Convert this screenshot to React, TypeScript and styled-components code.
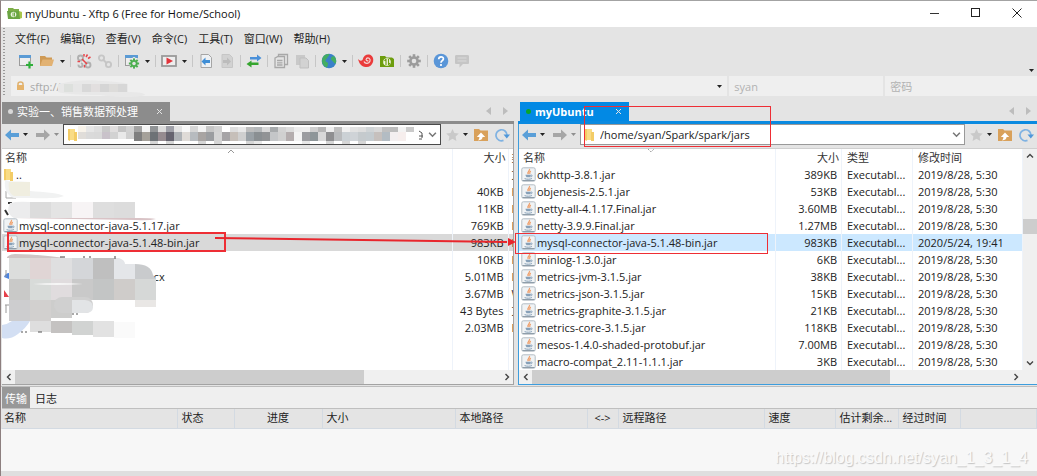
import React from "react";
import styled, { createGlobalStyle, css } from "styled-components";

const Global = createGlobalStyle`
  *, *::before, *::after { box-sizing: border-box; }
  body { margin: 0; background: #e4e4e4; }
  body, button, input, table {
    font-family: "Open Sans", "Noto Sans CJK SC", sans-serif;
    font-size: 11px;
    color: #222;
  }
  button { border: 0; padding: 0; background: none; }
  input { border: 0; padding: 0; background: none; outline: 0; min-width: 0; }
  svg { display: block; flex: none; }
`;

const Window = styled.div`
  display: flex;
  flex-direction: column;
  min-height: 100vh;
  border-top: 1px solid #a3a3a3;
  border-left: 1px solid #8d7f7f;
  background: #e4e4e4;
  overflow: hidden;
`;

const TitleBar = styled.header`
  display: flex;
  align-items: center;
  gap: 3px;
  height: 26px;
  padding: 0 12px 2px 6px;
  background: #fff;
`;

const Title = styled.h1`
  flex: 1;
  margin: 0;
  font-size: 11px;
  font-weight: 400;
  color: #111;
`;

const WindowButtons = styled.div`
  display: flex;
  gap: 25px;
`;

const WindowButton = styled.button`
  width: 16px;
  height: 16px;
  display: grid;
  place-items: center;
`;

const Bars = styled.div`
  display: flex;
  padding-top: 1px;
`;

const Grip = styled.div`
  width: 2px;
  margin: 0 6px 0 2px;
  background: repeating-linear-gradient(#9a9a9a 0 1px, transparent 1px 3px);
`;

const BarStack = styled.div`
  flex: 1;
  min-width: 0;
`;

const Menu = styled.nav`
  display: flex;
  gap: 11px;
  height: 20px;
  align-items: center;
  padding-left: 4px;
`;

const ToolBar = styled.div`
  display: flex;
  align-items: center;
  gap: 5px;
  height: 28px;
  padding: 0 3px 2px 7px;
`;

const ToolButton = styled.button<{ $push?: boolean }>`
  width: 16px;
  height: 16px;
  ${(p) =>
    p.$push &&
    css`
      width: 5px;
      margin: 18px 0 0 auto;
    `}
`;

const DropButton = styled.button`
  width: 5px;
  height: 16px;
  display: grid;
  place-items: center;
`;

const Separator = styled.span`
  width: 1px;
  height: 12px;
  background: #c6c6c6;
`;

const SessionBar = styled.div`
  display: grid;
  grid-template-columns: minmax(0, 717fr) minmax(0, 154fr) minmax(0, 152fr);
  gap: 2px;
  height: 20px;
`;

const SessionField = styled.label`
  position: relative;
  display: flex;
  align-items: center;
  gap: 5px;
  padding: 0 5px;
  background: #efefef;
  input { flex: 1; width: 0; color: #a8a8a8; }
  input::placeholder { color: #b2b2b2; opacity: 1; }
`;

const AddressMosaic = styled.svg`
  position: absolute;
  left: 47px;
  top: 3px;
`;

const Panes = styled.main`
  display: grid;
  grid-template-columns: minmax(0, 512fr) minmax(0, 519fr);
  gap: 4px;
  padding-left: 1px;
`;

const Pane = styled.section`
  position: relative;
  min-width: 0;
`;

const TabStrip = styled.div<{ $active: boolean }>`
  display: flex;
  align-items: flex-end;
  height: 28px;
  padding-left: ${(p) => (p.$active ? 2 : 0)}px;
  border-bottom: 3px solid ${(p) => (p.$active ? "#0b8ae0" : "#8c8c8c")};
`;

const Tab = styled.div<{ $active: boolean }>`
  display: flex;
  align-items: center;
  height: 19px;
  width: ${(p) => (p.$active ? 109 : 168)}px;
  padding: 0 7px 0 6px;
  background: ${(p) => (p.$active ? "#0289e4" : "#8c8c8c")};
  button { color: #fff; line-height: 18px; white-space: nowrap; }
  button:first-of-type {
    flex: 1;
    text-align: left;
    font-weight: ${(p) => (p.$active ? 700 : 400)};
  }
`;

const Dot = styled.span<{ $color: string }>`
  width: 5px;
  height: 5px;
  margin-right: 4px;
  border-radius: 50%;
  background: ${(p) => p.$color};
`;

const TabArrows = styled.div`
  display: flex;
  gap: 10px;
  margin: 0 6px 6px auto;
`;

const PaneBody = styled.div<{ $active: boolean }>`
  border: 1px solid ${(p) => (p.$active ? "#3d9ddd" : "#a3a3a3")};
  border-top: 0;
  border-left-width: ${(p) => (p.$active ? 1 : 0)}px;
  border-right-width: ${(p) => (p.$active ? 0 : 1)}px;
  background: #fff;
`;

const PaneTools = styled.div`
  display: flex;
  align-items: center;
  height: 25px;
  padding: 0 3px 3px;
  gap: 4px;
  background: #e4e4e4;
  border-bottom: 1px solid #cfcfcf;
`;

const PaneButton = styled.button<{ $w: number; $end?: boolean }>`
  width: ${(p) => p.$w}px;
  height: 16px;
  display: grid;
  align-items: center;
  justify-items: ${(p) => (p.$end ? "end" : "center")};
`;

const PathBox = styled.label<{ $active: boolean }>`
  position: relative;
  flex: 1;
  display: flex;
  align-items: center;
  height: 21px;
  min-width: 0;
  padding: 0 3px;
  gap: 4px;
  background: #fff;
  border: 1px solid ${(p) => (p.$active ? "#999" : "#4a4a4a")};
  input { flex: 1; width: 0; }
`;

const PathMosaic = styled.svg`
  position: absolute;
  left: 14px;
  top: 0;
`;

const ListArea = styled.div`
  position: relative;
  display: flex;
`;

const FileTable = styled.table<{ $active: boolean }>`
  flex: 1;
  width: 100%;
  min-width: 0;
  table-layout: fixed;
  border-collapse: collapse;
  th, td {
    height: 17px;
    padding: 0 4px 0 5px;
    line-height: 16px;
    font-weight: 400;
    text-align: left;
    white-space: nowrap;
    overflow: hidden;
    border-right: 1px solid #eef3fa;
  }
  th { position: relative; color: #333; }
  th:nth-child(2), td:nth-child(2) { text-align: right; }
  th:nth-child(2) { padding-right: 2px; }
  th:first-child { padding-left: ${(p) => (p.$active ? 4 : 3)}px; }
  td:first-child { padding-left: ${(p) => (p.$active ? 2 : 1)}px; }
  ${(p) =>
    !p.$active &&
    css`
      th:last-child, td:last-child { padding: 0 0 0 3px; border-right: 0; }
    `}
`;

const FileRow = styled.tr<{ $bg?: string }>`
  background: ${(p) => p.$bg || "transparent"};
`;

const FileName = styled.div<{ $shift?: boolean }>`
  display: flex;
  align-items: center;
  gap: 1px;
  height: 17px;
  padding-left: ${(p) => (p.$shift ? 144 : 0)}px;
`;

const SortMark = styled.svg`
  position: absolute;
  left: 50%;
  top: 0;
`;

const ListMosaic = styled.svg`
  position: absolute;
  left: 0;
  top: 0;
`;

const VScroll = styled.div`
  display: flex;
  flex-direction: column;
  align-items: center;
  width: 14px;
  background: #f0f0f0;
`;

const VThumb = styled.div`
  width: 14px;
  height: 15px;
  margin: 56px 0 auto;
  background: #cdcdcd;
`;

const HScroll = styled.div`
  display: flex;
  height: 14px;
  background: #f0f0f0;
`;

const HTrack = styled.div`
  flex: 1;
`;

const HThumb = styled.div<{ $share: number }>`
  width: ${(p) => p.$share}%;
  height: 14px;
  background: #cdcdcd;
`;

const ScrollButton = styled.button`
  width: 13px;
  height: 14px;
  display: grid;
  place-items: center;
`;

const ScrollCorner = styled.span`
  width: 15px;
`;

const Mark = styled.div<{ $x: number; $y: number; $w: number; $h: number; $line: number }>`
  position: absolute;
  left: ${(p) => p.$x}px;
  top: ${(p) => p.$y}px;
  width: ${(p) => p.$w}px;
  height: ${(p) => p.$h}px;
  border: ${(p) => p.$line}px solid #ee2e35;
  z-index: 2;
  pointer-events: none;
`;

const Arrow = styled.svg`
  position: absolute;
  right: -3px;
  top: 136px;
  z-index: 2;
`;

const Bottom = styled.section`
  position: relative;
  flex: 1;
  display: flex;
  flex-direction: column;
  margin-top: 1px;
  padding-left: 1px;
  border-top: 1px solid #bdbdbd;
`;

const BottomTabs = styled.div`
  display: flex;
  height: 22px;
  background: #efefef;
  border-bottom: 1px solid #bfbfbf;
`;

const BottomTab = styled.button<{ $on?: boolean }>`
  width: ${(p) => (p.$on ? 28 : 32)}px;
  height: 21px;
  background: ${(p) => (p.$on ? "#989898" : "transparent")};
  color: ${(p) => (p.$on ? "#fff" : "#222")};
`;

const TransferTable = styled.table`
  width: 100%;
  table-layout: fixed;
  border-collapse: collapse;
  th {
    height: 19px;
    padding: 0 4px;
    line-height: 16px;
    font-weight: 400;
    text-align: left;
    white-space: nowrap;
    overflow: hidden;
    background: #e4e4e4;
    border-right: 1px solid #d3dae2;
    border-bottom: 1px solid #d3dae2;
  }
  th:first-child { padding-left: 2px; }
  th:nth-child(3), th:nth-child(6) { text-align: center; }
`;

const TransferBody = styled.div`
  flex: 1;
  min-height: 40px;
  margin-left: -1px;
  background: #f7f7f7;
  border-bottom: 5px solid #dfdfdf;
`;

const Watermark = styled.span`
  position: absolute;
  right: 9px;
  bottom: 8px;
  font-family: "Liberation Sans", sans-serif;
  font-size: 16px;
  line-height: 20px;
  color: #fafafa;
  text-shadow: 1px 1px 1px #c4c4c4;
`;

const Down = ({ c = "#222" }: { c?: string }) => (
  <svg width="5" height="3" viewBox="0 0 5 3"><path d="M0 0h5L2.5 3z" fill={c} /></svg>
);

const Chevron = ({ dir, c = "#444", s = 8 }: { dir: "l" | "r" | "u" | "d"; c?: string; s?: number }) => {
  const d = { l: "M5.5 1 2.5 4 5.5 7", r: "M2.5 1 5.5 4 2.5 7", u: "M1 5.5 4 2.5 7 5.5", d: "M1 2.5 4 5.5 7 2.5" }[dir];
  return (
    <svg width={s} height={s} viewBox="0 0 8 8"><path d={d} fill="none" stroke={c} strokeWidth="1.4" /></svg>
  );
};

const JavaIcon = () => (
  <svg width="15" height="15" viewBox="0 0 15 15">
    <rect x=".8" y=".8" width="13.4" height="13.4" rx="1.5" fill="#f0f3f5" stroke="#b3bcc3" />
    <path d="M1.500 13.500h12" stroke="#8f9eaa" />
    <path d="M8.300 2c1.400 1.600-2.800 2.600-.9 5.200M9.800 4c-1.600 1-1.400 1.600-.9 3" fill="none" stroke="#efa06c" strokeWidth="1.300" />
    <path d="M4.500 7.800h5.400c.1 1.500-.8 2.400-1.100 2.500H5.700c-.7-.5-1.100-1.200-1.200-2.500z" fill="#86a0b8" />
    <path d="M10 8.200c1.800-.4 1.500 1.500-.5 1.700M3.600 11.600c2 .9 5.600.8 7.300-.1" fill="none" stroke="#86a0b8" />
  </svg>
);

const FolderIcon = () => (
  <svg width="12" height="14" viewBox="0 0 12 14">
    <path d="M1 1h7v11H1z" fill="#f9dc86" />
    <path d="M1 1h2v12L1 12zM7 4h3v9H7z" fill="#f3cc66" />
  </svg>
);

const BackIcon = () => (
  <svg width="14" height="12" viewBox="0 0 14 12"><path d="M0 6 6 .5V4h8v4H6v3.500z" fill="#5a9fd8" /></svg>
);
const ForwardIcon = () => (
  <svg width="14" height="12" viewBox="0 0 14 12"><path d="M14 6 8 .5V4H0v4h8v3.500z" fill="#a6a6a6" /></svg>
);

const Gear = ({ c, x = 8, y = 8, s = 1 }: { c: string; x?: number; y?: number; s?: number }) => (
  <g transform={`translate(${x} ${y}) scale(${s})`}>
    {[0, 45, 90, 135].map((a) => (
      <rect key={a} x="-1.300" y="-6.800" width="2.600" height="13.600" fill={c} transform={`rotate(${a})`} />
    ))}
    <circle r="4.800" fill={c} />
    <circle r="2.300" fill="#e4e4e4" />
  </g>
);

const tools: { name: string; art?: React.ReactNode; drop?: boolean; sep?: boolean }[] = [
  {
    name: "新建",
    art: (<><rect x="1.500" y="2.500" width="11" height="10" fill="#eee" stroke="#9b9b9b" /><path d="M1 2h12v3H1z" fill="#5b9bd5" /><path d="M11.500 8.500v7M8 12h7" stroke="#e4e4e4" strokeWidth="4" /><path d="M11.500 8.500v7M8 12h7" stroke="#2fae3a" strokeWidth="2.200" /></>),
  },
  {
    name: "打开", drop: true, sep: true,
    art: <><path d="M1 3h5l1.500 1.500H13V13H1z" fill="#cf9a55" /><path d="m1 13 2.500-6.500H15L13 13z" fill="#e2b273" /></>,
  },
  {
    name: "断开",
    art: (<><g fill="none" stroke="#b0b0b0" strokeWidth="1.900"><circle cx="4.500" cy="5" r="2.500" /><circle cx="12" cy="12" r="2.500" /><circle cx="4.500" cy="12" r="2" strokeDasharray="6 3" /></g><path d="m6 6 5 5M8 1v2.500M11.500 1.500 10 4M14.500 4 12 5.500M1.500 8.500H4M8.500 12v2.500" stroke="#e8454a" strokeWidth="1.500" /></>),
  },
  {
    name: "重新连接", sep: true,
    art: (<g fill="none" stroke="#c6c6c6" strokeWidth="1.900"><circle cx="4.500" cy="5" r="2.600" /><circle cx="11.500" cy="11.500" r="2.600" /><path d="m6 6.500 4 4" /></g>),
  },
  {
    name: "属性", drop: true, sep: true,
    art: (<><rect x="1.500" y="2.500" width="12" height="10" fill="#eee" stroke="#9b9b9b" /><path d="M1 2h13v3H1z" fill="#5b9bd5" /><Gear c="#e4e4e4" x={10} y={10.5} s={0.95} /><Gear c="#4caf50" x={10} y={10.5} s={0.75} /></>),
  },
  {
    name: "运行", drop: true, sep: true,
    art: (<><rect x="1" y="3" width="14" height="10" fill="#eee" stroke="#9a9a9a" strokeWidth="1.800" /><path d="M5.500 4.500v7L12 8z" fill="#e2343b" /></>),
  },
  {
    name: "下载",
    art: (<><path d="M3 1.500h7.500l3 3V14.500H3z" fill="#eef1f4" stroke="#a5a5a5" /><path d="m3.500 8.500 4-4V7H12v3H7.500v2.500z" fill="#3f8ed6" /></>),
  },
  {
    name: "上传", sep: true,
    art: (<><path d="M3 1.500h7.500l3 3V14.500H3z" fill="#d2d2d2" stroke="#c6c6c6" /><path d="m12 8.500-4-4V7H4v3h4v2.500z" fill="#bcbcbc" /></>),
  },
  {
    name: "传输", sep: true,
    art: (<><path d="M4 4h7V1.500L15.500 5 11 8.500V6.500H4z" fill="#4a90d9" /><path d="M12.500 9.500h-7V7.500L.5 11 5.500 14.500V12h7z" fill="#35a52f" /></>),
  },
  {
    name: "复制",
    art: (<g fill="#e4e4e4" stroke="#a8a8a8" strokeWidth="1.300"><path d="M5.500 1.500h9v10h-9z" /><path d="M2 5 5 3.500h6.500v11H2z" /><path d="M4 7.500h5.500M4 9.800h5.500M4 12h5.500" /></g>),
  },
  {
    name: "粘贴", sep: true,
    art: <><path d="M2 2h9v10H2z" fill="#c9c9c9" /><path d="M6 5h6l2.500 2.500V15H6z" fill="#d2d2d2" stroke="#bfbfbf" /></>,
  },
  {
    name: "浏览器", drop: true, sep: true,
    art: (<><circle cx="8" cy="8" r="7.300" fill="#3a80c9" /><path d="M1.500 5C3 1.500 6 .8 8 1c1 1.500-1 2-1.500 3.500S4 6.500 4.500 8s3 1 2.500 3-.5 3-1.500 3.500C2 13 0 9 1.500 5zM10 5c1-2 2.500-2 3.500-1.500 1.500 2 2.200 4 1.300 7-1.300.5-1.800-1-2.800-2S9.500 6.500 10 5z" fill="#43ad61" /></>),
  },
  {
    name: "Xshell",
    art: (<><path d="M0 6c2 2 3 2 4.500 1C5.500 3 8 1.200 11 1.500c3.500.5 5 4 4 7.500-1 3.500-4 5.500-7.500 5C3.500 13.500 1 10.500 0 6z" fill="#ea3b3b" /><path d="M6 8.500c1 2.500 5 2.500 6-.5.7-2.500-2-4-3.500-2.500-1.200 1.500.5 3 1.800 2" fill="none" stroke="#f6d9d6" strokeWidth="1.200" /></>),
  },
  {
    name: "Xftp", sep: true,
    art: (<><path d="M1 3h5l1.500 1.500H13L15 6v8H1z" fill="#6d9d0e" /><circle cx="8" cy="9" r="3.800" fill="#f4f7e8" /><path d="M7 6v6M9.500 6v6M5.500 8 7 6M11 10l-1.500 2" stroke="#6d9d0e" strokeWidth="1.200" /></>),
  },
  { name: "选项", sep: true, art: <Gear c="#9c9c9c" /> },
  {
    name: "帮助",
    art: (<><circle cx="8" cy="8" r="7.300" fill="#5a96d8" /><path d="M5.700 6.300c0-3.300 4.900-3.100 4.700-.4C10.300 7.600 8 7.700 8 9.700M8 11v2" fill="none" stroke="#fff" strokeWidth="1.700" /></>),
  },
  {
    name: "反馈",
    art: (<><path d="M2.500 2h11C15 2 15 3 15 3.500v6c0 1-.5 1.500-1.500 1.500H9l-3.500 3.500V11h-3C1.500 11 1 10.500 1 9.500v-6C1 2.500 1.500 2 2.500 2z" fill="#c5c5c5" /><path d="M3.500 5h9M3.500 8h9" stroke="#dadada" /></>),
  },
];

type FileItem = { name: string; size: string; type: string; date?: string; icon?: "java" | "folder"; shift?: boolean; bg?: string };

const localFiles: FileItem[] = [
  { name: "..", size: "", type: "文", icon: "folder" },
  { name: "", size: "40KB", type: "E" },
  { name: "", size: "11KB", type: "E" },
  { name: "mysql-connector-java-5.1.17.jar", size: "769KB", type: "E", icon: "java" },
  { name: "mysql-connector-java-5.1.48-bin.jar", size: "983KB", type: "E", icon: "java", bg: "#d9d9d9" },
  { name: "", size: "10KB", type: "E" },
  { name: "ocx", size: "5.01MB", type: "D", shift: true },
  { name: "", size: "3.67MB", type: "W" },
  { name: "", size: "43 Bytes", type: "文" },
  { name: "", size: "2.03MB", type: "E" },
];

const remoteFiles: FileItem[] = (
  [
    ["okhttp-3.8.1.jar", "389KB"],
    ["objenesis-2.5.1.jar", "53KB"],
    ["netty-all-4.1.17.Final.jar", "3.60MB"],
    ["netty-3.9.9.Final.jar", "1.27MB"],
    ["mysql-connector-java-5.1.48-bin.jar", "983KB"],
    ["minlog-1.3.0.jar", "6KB"],
    ["metrics-jvm-3.1.5.jar", "38KB"],
    ["metrics-json-3.1.5.jar", "15KB"],
    ["metrics-graphite-3.1.5.jar", "21KB"],
    ["metrics-core-3.1.5.jar", "118KB"],
    ["mesos-1.4.0-shaded-protobuf.jar", "7.00MB"],
    ["macro-compat_2.11-1.1.1.jar", "3KB"],
  ] as const
).map(([name, size], i) => ({
  name,
  size,
  type: "Executabl...",
  date: i === 4 ? "2020/5/24, 19:41" : "2019/8/28, 5:30",
  icon: "java" as const,
  bg: i === 4 ? "#cce8ff" : undefined,
}));

const pathCells = [
  "#f8f3ea #e6e6e6 #dedede #c9c9c9 #e0dede #c4c4c4 #d2d2d2 #a3a3a3 #f3f3f3 #919496 #dcdcdc #9fa0a8 #e4e4e4 #f8f8f8 #d6d6d6 #f2f2f2 #c6c6c6 #d2d2d2 #fff #dedede #e8e8e8 #bdbdbd #b5b8ba #d8d8d8 #a8abad #d3d3d3 #dcdcdc #ececec #ededed #cfcfcf #b7b7b7 #eeeeee #c0c0c0 #f0f0f0 #e2e2e2 #dedede #d0d4d6 #d8d8d8 #c0c0c0 #bdbdbd #f3f3f3 #cbcbcb".split(" "),
  "#e0ddd9 #dadada #d9d9d9 #c9c2ca #d2d2d2 #e9e9e9 #d0d0d0 #7f7f7f #a5a19a #6d7276 #958b90 #65636f #aeb2b6 #dfdbd7 #b7bbbf #a8a4a2 #9b9da0 #d4d4d4 #a6a4a6 #c6bfb9 #cfcfcf #9aa1a6 #8a8f92 #919395 #c4c6c8 #d0d0d0 #b4adae #f3f3f3 #9b9ca0 #8e9699 #d8d8d8 #8f8f91 #b9bbbd #cbd1d5 #cfd3d7 #c5cacd #c4cbcf #c6c0bd #b3bcc3 #f3eff0 #f6eeed #ffffff".split(" "),
];

const listCells: [number, number, number, number, string][] = [
  [30, 202, 21, 16, "#dcdcdc"], [51, 202, 21, 16, "#e4e4e4"], [72, 202, 21, 16, "#f7f4f5"], [93, 202, 21, 16, "#dedede"], [114, 202, 21, 16, "#dcdcdc"],
  [9, 258, 21, 21, "#dcdddc"], [30, 258, 21, 21, "#e0d5d5"], [51, 258, 21, 21, "#dfdfe0"], [72, 258, 21, 21, "#d4d6d9"], [93, 258, 21, 21, "#bfbfbf"],
  [9, 279, 21, 21, "#c9c9c8"], [30, 279, 21, 21, "#d8dbd9"], [51, 279, 21, 21, "#e0dcde"], [72, 279, 21, 21, "#c9c9c9"], [93, 279, 21, 21, "#c3c5c5"], [114, 279, 21, 21, "#cfccca"], [135, 279, 21, 21, "#d6d8d7"],
  [9, 300, 21, 21, "#cdcdcf"], [30, 300, 21, 21, "#d2d0cf"], [51, 300, 21, 18, "#cdcdcc"], [135, 300, 21, 7, "#e9e7e5"],
  [30, 321, 21, 11, "#dedede"], [51, 321, 21, 12, "#c4c2c1"], [72, 321, 21, 14, "#d1d3d2"], [93, 321, 21, 16, "#e2e2e2"], [114, 322, 21, 16, "#fafafa"],
];

const LocalMosaic = () => (
  <ListMosaic width="180" height="200" viewBox="2 149 180 200" aria-hidden="true">
    <path d="M6 191v7h10" fill="none" stroke="#a8a8a8" />
    <path d="M5 180c6 2 10 1 25 2v9c14 1 28 2 34 5-6 3-20 2-50 2-8-3-10-10-9-18z" fill="#f1f2f2" />
    <path d="M9 182h21v14H14c-5-2-6-9-5-14z" fill="#f0eee0" />
    <path d="M8 203h4M5 210l3 5" stroke="#333" strokeWidth="2" />
    <path d="M10 203q8-2 20-1v16H14q-9-5-4-15z" fill="#ececed" />
    <path d="M12 218h128q10 0 16 1-8 2-20 1z" fill="#d9c3c6" />
    <path d="M7 257q3-3 8-3 20 0 50 4H7z" fill="#cfc5c5" />
    <path d="M114 258h5q6 2 6 6h10v15h-21z" fill="#e4e6e9" />
    <path d="M135 264q16 0 18 11l3 4h-21z" fill="#c9cbcd" />
    <path d="M60 257h5M84 256v3M90 256v3M115 256v3" stroke="#444" />
    <path d="M4 277c1-3 3-4 5-4v6z" fill="#4b83df" />
    <path d="M4 290l5 7H4z" fill="#e5404a" />
    <path d="M6 270v7M5 305h5M6 305v8" stroke="#999" />
    {listCells.map(([x, y, w, h, c]) => (
      <rect key={`${x}-${y}`} x={x} y={y} width={w} height={h} fill={c} />
    ))}
    <path d="M2 325q6-1 10-4h18q-4 7-12 13-8 6-16 4z" fill="#d3dff3" />
    <rect x="54" y="297" width="39" height="16" rx="8" fill="#d0d0d0" />
    <path d="M72 300h13q8 1 8 7t-8 6H72z" fill="#e2e4e6" />
    <path d="M33 284q25-2 50 0-28 2-50 0z" fill="#f6f6f6" />
    <path d="M72 314h2M76 314h2M22 331v2M26 331v2M38 332h4" stroke="#555" />
  </ListMosaic>
);

const FilePane = ({
  active, tab, path, files, children,
}: { active: boolean; tab: string; path: string; files: FileItem[]; children?: React.ReactNode }) => (
  <Pane>
    <TabStrip $active={active}>
      <Tab $active={active}>
        <Dot $color={active ? "#0aa52a" : "#d8d8d8"} />
        <button>{tab}</button>
        <button aria-label="关闭标签">
          <svg width="7" height="7" viewBox="0 0 7 7"><path d="m1 1 5 5M6 1 1 6" stroke="#e4e4e4" /></svg>
        </button>
      </Tab>
      <TabArrows>
        <button aria-label="上一个"><svg width="6" height="8" viewBox="0 0 6 8"><path d="M5 0v8L0 4z" fill="#bdbdbd" /></svg></button>
        <button aria-label="下一个"><svg width="6" height="8" viewBox="0 0 6 8"><path d="M1 0v8l5-4z" fill="#bdbdbd" /></svg></button>
      </TabArrows>
    </TabStrip>
    <PaneBody $active={active}>
      <PaneTools>
        <PaneButton $w={14} aria-label="后退"><BackIcon /></PaneButton>
        <PaneButton $w={5} aria-label="后退历史"><Down /></PaneButton>
        <PaneButton $w={18} $end aria-label="前进"><ForwardIcon /></PaneButton>
        <PaneButton $w={5} aria-label="前进历史"><Down c="#8f8f8f" /></PaneButton>
        <PathBox $active={active}>
          <FolderIcon />
          <input aria-label="路径" defaultValue={path} />
          {!active && (
            <PathMosaic width="348" height="21" viewBox="0 0 348 21" aria-hidden="true">
              {pathCells.map((row, r) =>
                row.map((c, i) => (
                  <rect key={`${r}-${i}`} x={i * 8} y={r ? 7 : 1 + (i > 18 ? 1 : 0)} width="8" height={r ? (i < 7 ? 7 : 9) : 6} fill={c} />
                ))
              )}
              {[9, 11, 15, 17, 21, 22, 28, 31, 33, 35].map((i) => (
                <rect key={i} x={i * 8} y="16" width="8" height="3" fill={i % 2 ? "#d6d6d6" : "#e8e8e8"} />
              ))}
              <path d="m341 6 3 2M341 11h4M344 8v5M341 14h3" stroke="#555" />
            </PathMosaic>
          )}
          <button aria-label="展开路径"><Chevron dir="d" c="#777" s={9} /></button>
        </PathBox>
        <PaneButton $w={14} aria-label="收藏">
          <svg width="13" height="12" viewBox="0 0 13 12"><path d="m6.500 0 1.900 4 4.400.5-3.200 3 .8 4.400-3.900-2.200-3.900 2.200.8-4.400-3.200-3 4.400-.5z" fill="#c9c9c9" /></svg>
        </PaneButton>
        <PaneButton $w={5} aria-label="收藏列表"><Down /></PaneButton>
        <PaneButton $w={18} aria-label="上级目录">
          <svg width="14" height="12" viewBox="0 0 14 12"><path d="M0 0h5l1.500 1.500H14V12H0z" fill="#d9a15b" /><path d="M7 3.500 2.800 8h2.600Q5.500 10 4 11.500 8.500 11 8.600 8h2.600z" fill="#fff" /></svg>
        </PaneButton>
        <PaneButton $w={16} $end aria-label="刷新">
          <svg width="15" height="14" viewBox="0 0 15 14"><path d="M8.500 12.400A5.500 5.500 0 1 1 12 7" fill="none" stroke="#7fb2e2" strokeWidth="1.700" /><path d="M8.500 6.500H15l-3.200 4z" fill="#4f97d9" /></svg>
        </PaneButton>
      </PaneTools>
      <ListArea>
        <FileTable $active={active}>
          <colgroup>
            <col />
            <col style={{ width: active ? 66 : 56 }} />
            <col style={{ width: active ? 71 : 5 }} />
            {active && <col style={{ width: 110 }} />}
          </colgroup>
          <thead>
            <tr>
              <th>
                名称
                <SortMark width="8" height="5" viewBox="0 0 8 5">
                  <path d={active ? "M1 0 4 3 7 0" : "M1 4 4 1 7 4"} fill="none" stroke="#999" strokeDasharray={active ? "1.500 1" : undefined} />
                </SortMark>
              </th>
              <th>大小</th>
              <th>{active ? "类型" : "类"}</th>
              {active && <th>修改时间</th>}
            </tr>
          </thead>
          <tbody>
            {files.map((f, i) => (
              <FileRow key={i} $bg={f.bg}>
                <td>
                  <FileName $shift={f.shift}>
                    {f.icon === "java" && <JavaIcon />}
                    {f.icon === "folder" && <FolderIcon />}
                    <span>{f.name}</span>
                  </FileName>
                </td>
                <td>{f.size}</td>
                <td>{f.type}</td>
                {active && <td>{f.date}</td>}
              </FileRow>
            ))}
            {!active && [0, 1].map((i) => (
              <FileRow key={`blank${i}`}><td /><td /><td /></FileRow>
            ))}
          </tbody>
        </FileTable>
        {active && (
          <VScroll>
            <ScrollButton aria-label="向上滚动"><Chevron dir="u" /></ScrollButton>
            <VThumb />
            <ScrollButton aria-label="向下滚动"><Chevron dir="d" /></ScrollButton>
          </VScroll>
        )}
        {!active && <LocalMosaic />}
      </ListArea>
      <HScroll>
        <ScrollButton aria-label="向左滚动"><Chevron dir="l" /></ScrollButton>
        <HTrack><HThumb $share={active ? 75 : 72} /></HTrack>
        <ScrollButton aria-label="向右滚动"><Chevron dir="r" /></ScrollButton>
        {active && <ScrollCorner />}
      </HScroll>
    </PaneBody>
    {children}
  </Pane>
);

const transferColumns: [string, number?][] = [
  ["名称", 175], ["状态", 57], ["进度", 88], ["大小", 133], ["本地路径", 132], ["<->", 31],
  ["远程路径", 146], ["速度", 71], ["估计剩余...", 63], ["经过时间", 62], [""],
];

export default function App() {
  return (
    <>
      <Global />
      <Window>
        <TitleBar>
          <svg width="15" height="13" viewBox="0 0 15 13">
            <path d="M1 1h5l1 1h5v9H1z" fill="#7cae48" /><path d="M12 4l3 1v6l-3 1z" fill="#a8c64c" /><path d="M0 4h12l1 8H1z" fill="#6ba543" />
            <circle cx="6.500" cy="7.500" r="2.800" fill="#eef5e4" /><path d="M6 5.500v4M7.500 5.500v4" stroke="#6ba543" />
          </svg>
          <Title>myUbuntu - Xftp 6 (Free for Home/School)</Title>
          <WindowButtons>
            <WindowButton aria-label="最小化"><svg width="10" height="10"><path d="M0 5.500h9" stroke="#333" /></svg></WindowButton>
            <WindowButton aria-label="最大化"><svg width="10" height="10"><rect x=".5" y=".5" width="8" height="8" fill="none" stroke="#222" /></svg></WindowButton>
            <WindowButton aria-label="关闭"><svg width="10" height="10"><path d="m.5.5 9 9M9.500.5l-9 9" stroke="#222" /></svg></WindowButton>
          </WindowButtons>
        </TitleBar>
        <Bars>
          <Grip />
          <BarStack>
            <Menu>
              {["文件(F)", "编辑(E)", "查看(V)", "命令(C)", "工具(T)", "窗口(W)", "帮助(H)"].map((m) => (
                <button key={m}>{m}</button>
              ))}
            </Menu>
            <ToolBar>
              {tools.map((t) => (
                <React.Fragment key={t.name}>
                  <ToolButton aria-label={t.name}><svg width="16" height="16" viewBox="0 0 16 16">{t.art}</svg></ToolButton>
                  {t.drop && <DropButton aria-label={`${t.name}菜单`}><Down /></DropButton>}
                  {t.sep && <Separator />}
                </React.Fragment>
              ))}
              <ToolButton $push aria-label="工具栏选项"><Down /></ToolButton>
            </ToolBar>
            <SessionBar>
              <SessionField>
                <svg width="9" height="10" viewBox="0 0 9 10"><path d="M2 5V3q0-2 2.500-2T7 3v2" fill="none" stroke="#dfb16f" strokeWidth="1.500" /><rect x="1" y="4" width="7" height="5" fill="#e5b36c" /></svg>
                <input aria-label="主机地址" defaultValue="sftp://" />
                <AddressMosaic width="90" height="18" viewBox="58 79 90 18" aria-hidden="true">
                  <path d="M58 84q2-1 6-1 16-4 38-2 20 1 26 3v8q16 0 17 3-15 4-45 0-32 0-42-3z" fill="#e8e8e8" />
                  {["#dde0dd", "#e6e6e6", "#d8d8d8", "#e2dfdf", "#d5d5d5", "#dddcda", "#d7d7d7"].map((c, i) => (
                    <rect key={i} x={64 + i * 9} y="84" width="9" height="8" fill={c} />
                  ))}
                </AddressMosaic>
                <button aria-label="历史地址"><Down /></button>
              </SessionField>
              <SessionField><input aria-label="用户名" placeholder="syan" /></SessionField>
              <SessionField><input aria-label="密码" type="password" placeholder="密码" /></SessionField>
            </SessionBar>
          </BarStack>
        </Bars>
        <Panes>
          <FilePane active={false} tab="实验一、销售数据预处理" path="" files={localFiles}>
            <Mark $x={5} $y={136} $w={219} $h={20} $line={2} />
            <Arrow width="304" height="14" viewBox="0 0 304 14" aria-hidden="true">
              <path d="M2 6 294 10" stroke="#e8262d" strokeWidth="2" /><path d="m303 10-8-4v8z" fill="#e8262d" />
            </Arrow>
          </FilePane>
          <FilePane active tab="myUbuntu" path="/home/syan/Spark/spark/jars" files={remoteFiles}>
            <Mark $x={66} $y={10} $w={187} $h={41} $line={1} />
            <Mark $x={-3} $y={137} $w={253} $h={21} $line={1} />
          </FilePane>
        </Panes>
        <Bottom>
          <BottomTabs role="tablist">
            <BottomTab $on role="tab" aria-selected="true">传输</BottomTab>
            <BottomTab role="tab" aria-selected="false">日志</BottomTab>
          </BottomTabs>
          <TransferTable>
            <colgroup>{transferColumns.map(([n, w]) => <col key={n} style={{ width: w }} />)}</colgroup>
            <thead><tr>{transferColumns.map(([n]) => <th key={n}>{n}</th>)}</tr></thead>
          </TransferTable>
          <TransferBody />
          <Watermark>https://blog.csdn.net/syan_1_3_1_4</Watermark>
        </Bottom>
      </Window>
    </>
  );
}
